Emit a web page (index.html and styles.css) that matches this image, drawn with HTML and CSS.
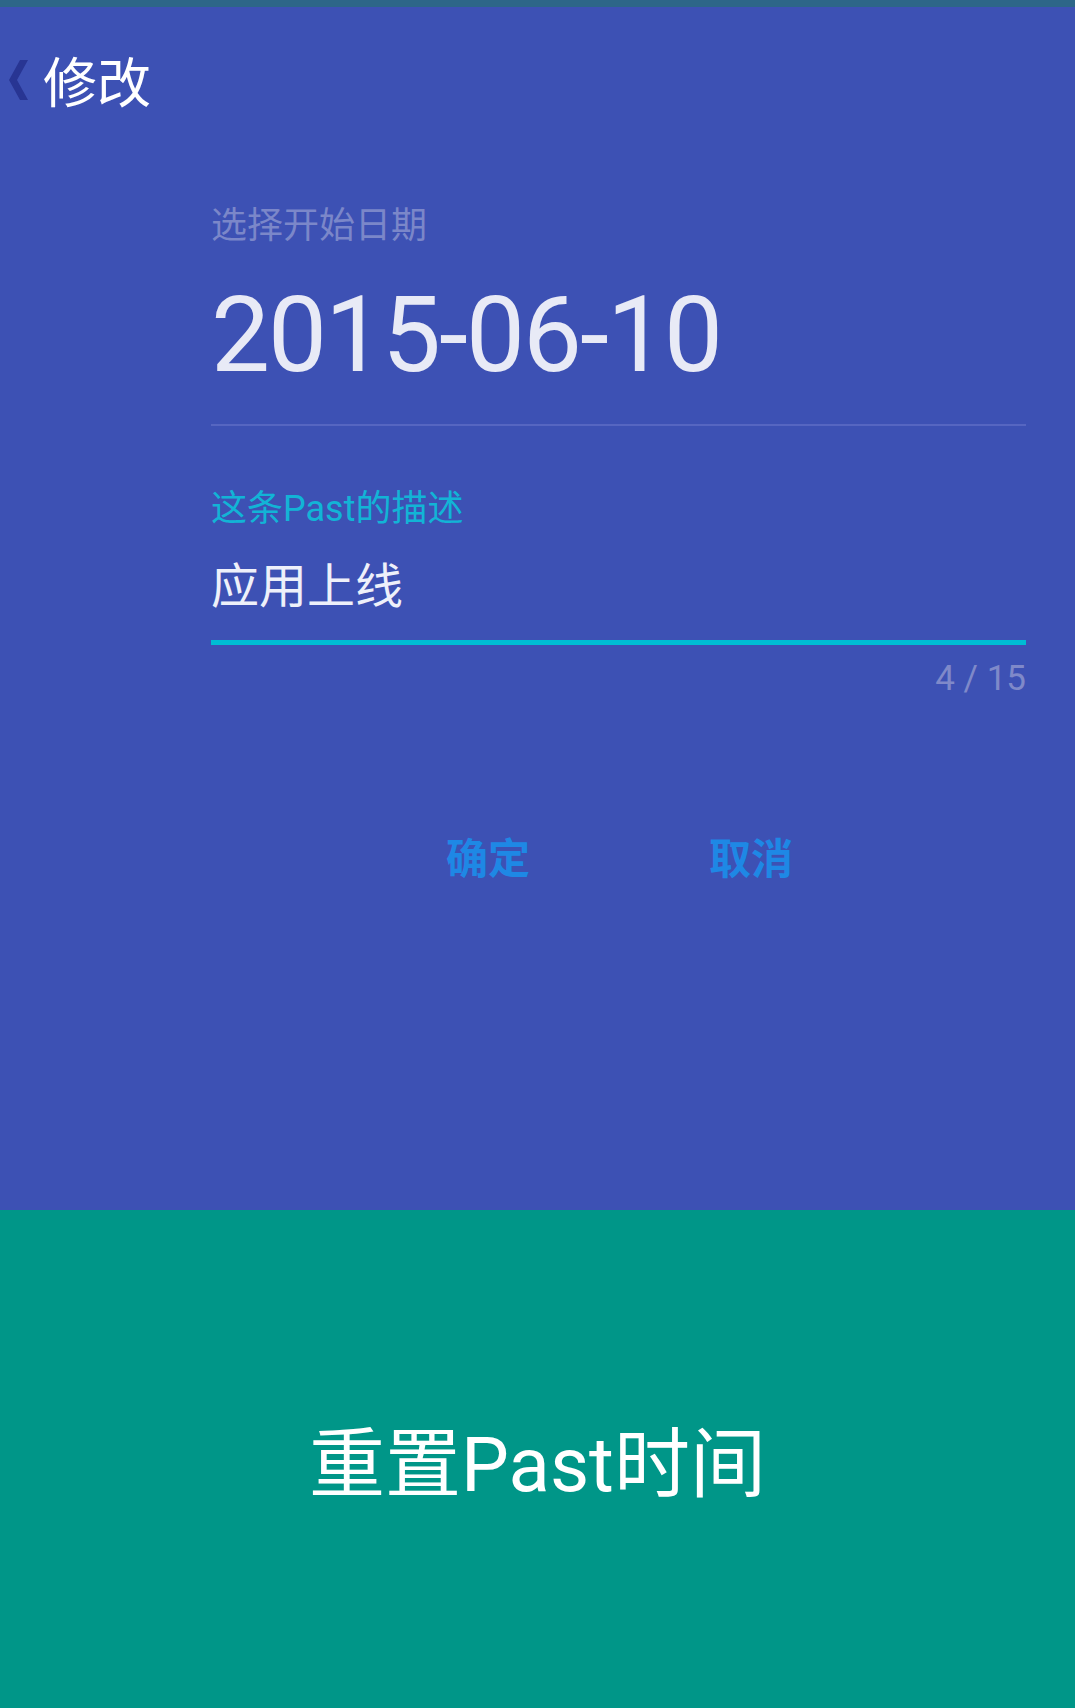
FILE: index.html
```html
<!DOCTYPE html>
<html lang="zh">
<head>
<meta charset="utf-8">
<title>修改</title>
<link rel="stylesheet" href="styles.css">
</head>
<body>
<div class="status"></div>
<main class="screen">
  <header class="topbar">
    <svg class="back" width="20" height="40" viewBox="0 0 20 40">
      <polygon points="19,0 8,20 19,40 11,40 0,20 11,0" fill="#283593"/>
    </svg>
    <h1 class="title">修改</h1>
  </header>
  <section class="form">
    <div class="date-label">选择开始日期</div>
    <div class="date-value">2015-06-10</div>
    <div class="divider"></div>
    <div class="desc-label">这条Past的描述</div>
    <div class="desc-value">应用上线</div>
    <div class="underline"></div>
    <div class="counter">4 / 15</div>
  </section>
  <div class="actions">
    <span class="btn">确定</span>
    <span class="btn">取消</span>
  </div>
</main>
<footer class="reset">
  <span class="reset-text">重置Past时间</span>
</footer>
</body>
</html>
```
FILE: styles.css
```css
html, body {
  margin: 0;
  padding: 0;
}
body {
  width: 1075px;
  height: 1708px;
  overflow: hidden;
  font-family: Roboto, "Noto Sans CJK SC", sans-serif;
  background: #009688;
}
.status {
  height: 7px;
  background: #2d6688;
}
.screen {
  height: 1203px;
  background: #3d51b4;
  box-sizing: border-box;
}
.topbar {
  height: 146px;
  display: flex;
  align-items: center;
  padding-left: 9px;
}
.back {
  display: block;
}
.title {
  margin: 0 0 0 14px;
  font-family: "Noto Sans CJK SC", sans-serif;
  font-weight: 400;
  font-size: 54px;
  line-height: 54px;
  color: #ffffff;
}
.form {
  margin: 0 49px 0 211px;
}
.date-label {
  margin-top: 51px;
  font-family: "Noto Sans CJK SC", sans-serif;
  font-size: 36px;
  line-height: 36px;
  color: #7b87c9;
}
.date-value {
  margin-top: 44px;
  font-size: 105px;
  line-height: 104px;
  color: #e8eaf6;
  letter-spacing: -2px;
}
.divider {
  margin-top: 36px;
  height: 2px;
  background: #5666c1;
}
.desc-label {
  margin-top: 65px;
  font-size: 36px;
  line-height: 36px;
  color: #12b4d6;
}
.desc-value {
  margin-top: 31px;
  font-family: "Noto Sans CJK SC", sans-serif;
  font-size: 48px;
  line-height: 48px;
  color: #eef0fa;
}
.underline {
  margin-top: 34px;
  height: 5px;
  background: #00bcd4;
}
.counter {
  margin-top: 16px;
  text-align: right;
  font-size: 35px;
  line-height: 35px;
  color: #7f89c9;
}
.actions {
  display: flex;
  margin-top: 139px;
  padding-left: 446px;
  gap: 179px;
}
.btn {
  font-family: "Noto Sans CJK SC", sans-serif;
  font-weight: 700;
  font-size: 42px;
  line-height: 42px;
  color: #1e88e5;
}
.reset {
  height: 498px;
  display: flex;
  align-items: center;
  justify-content: center;
}
.reset-text {
  margin-top: 12px;
  font-size: 76px;
  line-height: 76px;
  color: #ffffff;
}
```
